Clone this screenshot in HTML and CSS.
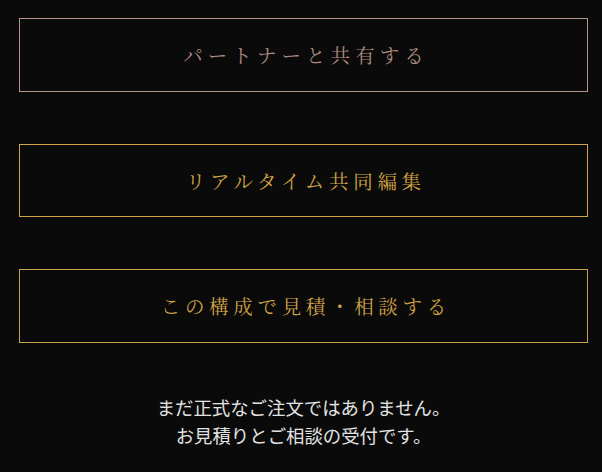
FILE: index.html
```html
<!DOCTYPE html>
<html lang="ja">
<head>
  <meta charset="UTF-8">
  <meta name="viewport" content="width=device-width, initial-scale=1.0">
  <title>見積・相談</title>
  <link rel="stylesheet" href="styles.css">
</head>
<body>
  <div class="actions">
    <button class="action share">パートナーと共有する</button>
    <button class="action">リアルタイム共同編集</button>
    <button class="action quote">この構成で見積・相談する</button>
    <p class="note">まだ正式なご注文ではありません。<br>お見積りとご相談の受付です。</p>
  </div>
</body>
</html>
```

FILE: styles.css
```css
html, body {
  margin: 0;
  background-color: #0a0a0a;
}
body {
  font-family: "Noto Serif CJK JP", "Noto Sans CJK JP", serif;
}
.actions {
  display: flex;
  flex-direction: column;
  gap: 52px;
  padding: 18px 14px 0 19px;
}
.action {
  display: block;
  width: 100%;
  height: 73.5px;
  padding: 0;
  background: transparent;
  border: 1px solid #d0a545;
  color: #cfa244;
  font-family: inherit;
  font-size: 19.5px;
  letter-spacing: 0.24em;
  text-indent: 0.24em;
  line-height: 1.4;
  padding-top: 2px;
  cursor: pointer;
}
.action.share {
  border-color: #b8948b;
  color: #b08b82;
  letter-spacing: 0.26em;
  text-indent: 0.26em;
}
.action.quote {
  border-color: #c9a24a;
}
.action:hover {
  background-color: #141210;
}
.note {
  margin: -2px 0 0;
  color: #e2e2e2;
  font-family: "Noto Sans CJK JP", sans-serif;
  font-size: 18.4px;
  line-height: 28px;
  text-align: center;
}
```
